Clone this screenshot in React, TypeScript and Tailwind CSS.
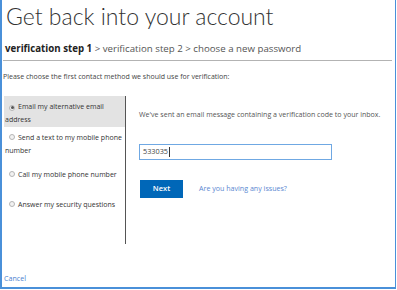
import React from "react";

const font = { fontFamily: '"Open Sans", "Noto Sans", Arial, sans-serif' };

function Radio({ checked }: { checked?: boolean }) {
  return (
    <span className="inline-flex items-center justify-center w-[6px] h-[6px] rounded-full border border-[#b5b5b5] bg-[#f2f2f2] ml-[4px] mr-[3px] align-[0px]">
      {checked && <span className="w-[3px] h-[3px] rounded-full bg-[#555]" />}
    </span>
  );
}

export default function App() {
  // radio options on the left
  const options = [
    { label: "Email my alternative email address", checked: true, cls: "pt-[5px] pb-[1px] bg-[#e3e3e3]" },
    { label: "Send a text to my mobile phone number", cls: "mt-[5px]" },
    { label: "Call my mobile phone number", cls: "mt-[11px]" },
    { label: "Answer my security questions", cls: "mt-[17px]" },
  ];

  return (
    <div className="w-[397px] h-[290px] bg-white overflow-hidden" style={font}>
      <div className="w-[396px] h-[289px] border-l-2 border-r border-b-2 border-[#4a90d9] flex flex-col">
        {/* Title */}
        <h1
          className="mt-[6px] pl-[4px] h-[21px] leading-[21px] text-[23px] font-light text-[#333] whitespace-nowrap"
          style={{ fontFamily: 'Lato, "Open Sans", sans-serif' }}
        >
          Get back into your account
        </h1>

        {/* Steps */}
        <div className="mt-[15px] pl-[3px] text-[9.7px] leading-[13px] text-[#555] whitespace-nowrap">
          <span className="font-bold text-[#222]">verification step 1</span>
          <span> &gt; verification step 2 &gt; choose a new password</span>
        </div>

        <div className="mt-[5px] ml-[1px] w-[389px] h-px bg-[#b3b3b3]" />

        <p className="mt-[11px] pl-[1px] text-[7px] leading-[10px] text-[#444] whitespace-nowrap">
          Please choose the first contact method we should use for verification:
        </p>

        <div className="mt-[14px] flex">
          {/* Left column */}
          <div className="ml-[2px] w-[122px] h-[148px] border-r border-[#555] flex flex-col">
            {options.map((o) => (
              <div key={o.label} className={`pl-[1px] pr-[2px] text-[7px] leading-[12.7px] text-[#333] ${o.cls}`}>
                <Radio checked={o.checked} />
                {o.label}
              </div>
            ))}
          </div>

          {/* Right content */}
          <div className="pl-[13px] pt-[12px] flex flex-col">
            <p className="text-[7.05px] leading-[12.7px] text-[#555] whitespace-nowrap">
              We've sent an email message containing a verification code to your inbox.
            </p>
            <div className="mt-[23px] w-[193px] h-[16px] border border-[#6fa8e3] flex items-center pl-[3px] text-[7.3px] text-[#444]">
              533035<span className="ml-[1px] w-px h-[10px] bg-[#333]" />
            </div>
            <div className="mt-[20px] flex items-center">
              <button className="w-[43px] h-[18px] ml-[1px] bg-[#0067b8] text-white text-[7.5px] font-semibold">
                Next
              </button>
              <span className="ml-[16px] text-[7.1px] text-[#5a87d1]">Are you having any issues?</span>
            </div>
          </div>
        </div>

        <div className="mt-auto mb-[4px] pl-[2px] text-[7.1px] leading-[10px] text-[#4a7fd0]">Cancel</div>
      </div>
    </div>
  );
}
